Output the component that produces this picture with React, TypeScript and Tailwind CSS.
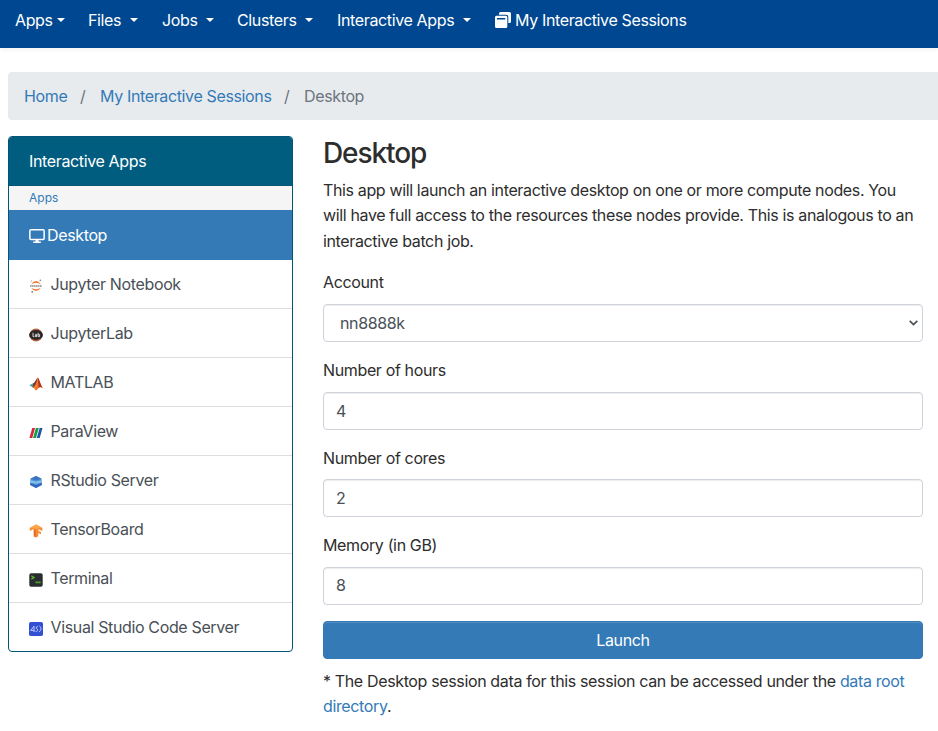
import type { ReactNode } from "react";

const Caret = ({ className }: { className: string }) => (
  <span className={`inline-block border-x-[4px] border-t-[4px] border-x-transparent border-t-white ${className}`} />
);

const JupyterIcon = () => (
  <svg width="14" height="14" viewBox="0 0 14 14">
    <path d="M2 5.4Q7 -1.2 12 5.4Q7 2.6 2 5.4ZM2 8.8Q7 15.4 12 8.8Q7 11.6 2 8.8Z" fill="#f07c3f" />
    <path d="M1 7.1H13" stroke="#8a8a8a" strokeWidth="1.5" strokeDasharray="1.5 .4" />
    <circle cx="11.3" cy="1.2" r=".8" fill="#777" />
    <circle cx="2.3" cy="2" r=".5" fill="#777" />
    <circle cx="3.2" cy="12.9" r=".8" fill="#666" />
  </svg>
);

const LabIcon = () => (
  <svg width="14" height="14" viewBox="0 0 14 14">
    <circle cx="7" cy="7" r="6.5" fill="#b9603c" />
    <ellipse cx="7" cy="7" rx="6.9" ry="5.1" fill="#2b2726" />
    <path d="M4 4.8V8.6H5.2M6.2 6.4H7.7V8.6H6.2V7.4H7.7M9.1 4.8V8.6H10.6V6.6H9.1" stroke="#d5d5d5" strokeWidth="1" fill="none" />
  </svg>
);

const MatlabIcon = () => (
  <svg width="14" height="14" viewBox="0 0 14 14">
    <path d="M.3 8.2L4.5 6L6 8.2L3.4 10.3Z" fill="#4eaaa9" />
    <path d="M4.5 6C6 6 7 2 8.8 .6L7.5 8L5 11L3.4 10.3Z" fill="#7b3434" />
    <path d="M8.8 .6C10.3 2 11.6 8 13.8 11.2C11.8 9.8 10.6 9.8 9 11.7C8 13 7 13.5 6.2 13.3C5.8 11.5 5 10.5 3.6 10.2C6.5 9.6 7.6 5 8.8 .6Z" fill="#ef7a2b" />
    <path d="M8.8 .6C10.3 2 11.6 8 13.8 11.2C11.8 9.8 10.8 9.8 9.7 11Z" fill="#b52f24" />
  </svg>
);

const ParaViewIcon = () => (
  <svg width="14" height="14" viewBox="0 0 14 14">
    <path d="M3.2 2H6.1L3.3 12H.4Z" fill="#d7283b" />
    <path d="M6.9 2H9.8L7 12H4.1Z" fill="#10a04c" />
    <path d="M10.6 2H13.5L10.7 12H7.8Z" fill="#2455a5" />
  </svg>
);

const RStudioIcon = () => (
  <svg width="14" height="14" viewBox="0 0 14 14">
    <path d="M7 .9L12.6 3.8V10.1L7 13.1L1.4 10.1V3.8Z" fill="#4f91d6" />
    <path d="M1.4 3.8L7 .9L12.6 3.8L7 5.2Z" fill="#3974c0" />
    <path d="M1 5L7 6.6L13 5V7.4L8 8.8L1 7.8Z" fill="#82bfea" />
    <path d="M1.2 8L7 10.2L12.8 7.4V10.1L7 13.1L1.2 10.1Z" fill="#3167ba" />
  </svg>
);

const TensorIcon = () => (
  <svg width="14" height="14" viewBox="0 0 14 14">
    <path d="M7.2 .6L13.4 4V7.1L9.5 5.2V7L12 8V10.2L9.3 9V12.3L7 13.6L4.8 12.3V5L.8 7V4Z" fill="#f68b32" />
    <path d="M7.2 .6L13.4 4L7.2 4.8L.8 4Z" fill="#fba544" />
    <path d="M4.8 5L6.8 6V13.5L4.8 12.3Z" fill="#ec6a29" />
  </svg>
);

const TerminalIcon = () => (
  <svg width="14" height="14" viewBox="0 0 14 14">
    <rect x=".3" y=".3" width="13.4" height="13.4" rx="1.8" fill="#292d30" />
    <path d="M2.3 2.8L5 4.6L2.3 6.3" stroke="#5fb62b" strokeWidth="1.3" fill="none" />
    <path d="M6.4 9.3H11.7" stroke="#4a9d25" strokeWidth="1.7" />
  </svg>
);

const CodeServerIcon = () => (
  <svg width="14" height="14" viewBox="0 0 14 14">
    <rect width="14" height="14" rx="1.8" fill="#3350d2" />
    <path d="M1.3 8.4H5.6M5.2 4L2 8M5 4.3V10M8.9 4.4Q6.8 4.8 7.2 6.2Q9 7 8.6 8.4Q8.1 9.7 6.6 9.6M10.2 3.8Q12.3 4.9 12.1 7Q11.8 9 9.8 10" stroke="#b9c6ff" strokeWidth="1" fill="none" />
  </svg>
);

const DesktopIcon = () => (
  <svg width="16" height="14" viewBox="0 0 16 14" className="shrink-0">
    <rect x=".85" y=".85" width="14.3" height="9.6" rx="1" fill="none" stroke="white" strokeWidth="1.5" />
    <path d="M6.7 10.5H9.3L9.7 12.6H11.8V14H4.2V12.6H6.3Z" fill="white" />
  </svg>
);

const WindowsIcon = () => (
  <svg width="16" height="16" viewBox="0 0 16 16" className="-mt-px shrink-0">
    <path d="M5.5 0H14.5Q16 0 16 1.5V9.5Q16 11 14.5 11H13.3V4.8Q13.3 2.7 11.2 2.7H4V1.5Q4 0 5.5 0Z" fill="white" />
    <path fillRule="evenodd" d="M1.5 3.7H10.8Q12.3 3.7 12.3 5.2V14.5Q12.3 16 10.8 16H1.5Q0 16 0 14.5V5.2Q0 3.7 1.5 3.7ZM2 6V7.6H10.3V6Z" fill="white" />
  </svg>
);

const apps: { name: string; icon: ReactNode }[] = [
  { name: "Jupyter Notebook", icon: <JupyterIcon /> },
  { name: "JupyterLab", icon: <LabIcon /> },
  { name: "MATLAB", icon: <MatlabIcon /> },
  { name: "ParaView", icon: <ParaViewIcon /> },
  { name: "RStudio Server", icon: <RStudioIcon /> },
  { name: "TensorBoard", icon: <TensorIcon /> },
  { name: "Terminal", icon: <TerminalIcon /> },
  { name: "Visual Studio Code Server", icon: <CodeServerIcon /> },
];

const menus = [
  { name: "Apps", box: "w-[73px]", caret: "ml-[4px]" },
  { name: "Files", box: "w-[74px]", caret: "ml-[9px]" },
  { name: "Jobs", box: "w-[75px]", caret: "ml-[8px]" },
  { name: "Clusters", box: "w-[100px]", caret: "ml-[9px]" },
  { name: "Interactive Apps", box: "w-[158px]", caret: "ml-[9px]" },
];

const fields = [
  { label: "Number of hours", value: "4", nudge: "pt-[2px]" },
  { label: "Number of cores", value: "2", nudge: "pt-[1px]" },
  { label: "Memory (in GB)", value: "8", nudge: "pt-0" },
];

export default function App() {
  return (
    <div className="h-[731px] overflow-hidden bg-white font-['Inter','Liberation_Sans',sans-serif] text-base leading-[25.6px] tracking-[-0.36px] text-[#2d2d2d]">
      <nav className="flex h-12 items-start bg-[#004791] pt-2 pl-[15px] whitespace-nowrap text-white shadow-[0_2px_4px_rgba(0,0,0,0.05)]">
        {menus.map((m) => (
          <a key={m.name} className={`flex shrink-0 items-center ${m.box}`}>
            {m.name}
            <Caret className={`-mt-px ${m.caret}`} />
          </a>
        ))}
        <a className="flex items-center gap-1">
          <WindowsIcon />
          My Interactive Sessions
        </a>
      </nav>

      <div className="mt-6 ml-2 flex h-12 items-center rounded-l-[4px] bg-[#e8ebee] pt-[2px] pl-4 text-[#337ab7]">
        <a className="w-14">Home</a>
        <span className="w-5 text-[#6c757d]">/</span>
        <a className="w-[184px]">My Interactive Sessions</a>
        <span className="w-5 text-[#6c757d]">/</span>
        <span className="text-[#6c757d]">Desktop</span>
      </div>

      <div className="mt-4 flex items-start pl-2">
        <aside className="flex h-[516px] w-[285px] shrink-0 flex-col overflow-hidden rounded-[4px] border border-[#015576]">
          <div className="flex h-[49px] shrink-0 items-center border-b border-[#015576] bg-[#005d80] pt-[2px] pl-5 text-white">
            Interactive Apps
          </div>
          <div className="flex h-6 shrink-0 items-center bg-[#f5f5f5] pl-5 text-xs tracking-normal text-[#337ab7]">Apps</div>
          <div className="flex h-[50px] shrink-0 items-center gap-[2px] bg-[#337ab7] pt-[2px] pl-5 text-white">
            <DesktopIcon />
            Desktop
          </div>
          {apps.map((a) => (
            <a key={a.name} className="flex h-[49px] shrink-0 items-center border-b border-[#dcdee0] pl-5 text-[#495057] last:h-12 last:border-0">
              <span className="mr-[7.5px] pt-[3px]">{a.icon}</span>
              <span className="pt-[2px]">{a.name}</span>
            </a>
          ))}
        </aside>

        <main className="ml-[30px] w-[600px]">
          <h1 className="mb-[7px] pt-px text-[28px] leading-[33.6px] font-medium tracking-[-1.1px]">Desktop</h1>
          <p className="mb-4 whitespace-nowrap">
            This app will launch an interactive desktop on one or more compute nodes. You
            <br />
            will have full access to the resources these nodes provide. This is analogous to an
            <br />
            interactive batch job.
          </p>
          <div className="mb-4">
            <div className="mb-2">Account</div>
            <div className="flex h-[38px] items-center justify-between rounded-[4px] border border-[#ced4da] pr-1 pl-4 text-[#495057] shadow-[inset_0_1px_1px_rgba(0,0,0,0.075)]">
              <span className="pt-[2px]">nn8888k</span>
              <svg width="9" height="6" viewBox="0 0 9 6">
                <path d="M.7 .8L4.5 4.6L8.3 .8" fill="none" stroke="#495057" strokeWidth="1.7" />
              </svg>
            </div>
          </div>
          {fields.map((f) => (
            <div key={f.label} className="mb-4">
              <div className="mb-2">{f.label}</div>
              <div className={`flex h-[38px] items-center rounded-[4px] border border-[#ced4da] pl-3 text-[#495057] shadow-[inset_0_1px_1px_rgba(0,0,0,0.075)] ${f.nudge}`}>
                {f.value}
              </div>
            </div>
          ))}
          <button className="block h-[38px] w-full rounded-[4px] border border-[#337ab7] bg-[#337ab7] pt-[2px] text-white shadow-[inset_0_1px_0_rgba(255,255,255,0.15)]">
            Launch
          </button>
          <p className="mt-[10px] whitespace-nowrap">
            * The Desktop session data for this session can be accessed under the <a className="text-[#337ab7]">data root</a>
            <br />
            <a className="text-[#337ab7]">directory</a>.
          </p>
        </main>
      </div>
    </div>
  );
}
